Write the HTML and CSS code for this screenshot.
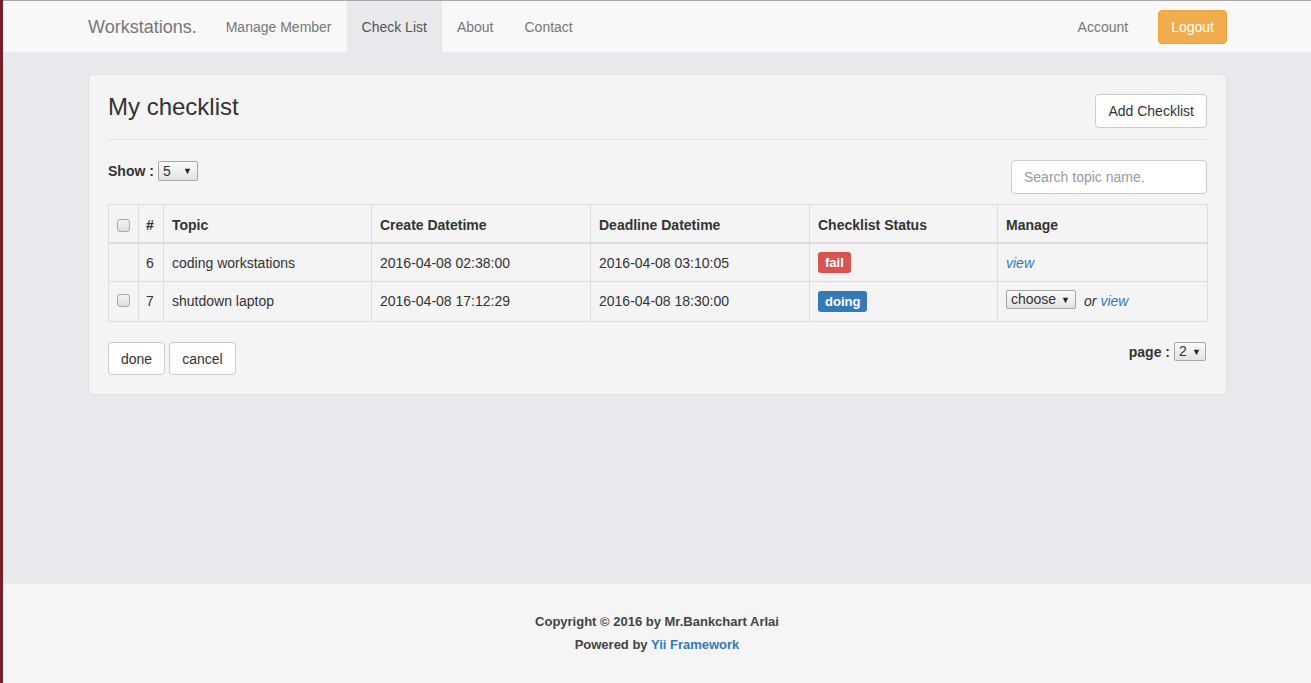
FILE: index.html
```html
<!DOCTYPE html>
<html lang="en">
<head>
<meta charset="utf-8">
<title>Workstations - Check List</title>
<link rel="stylesheet" href="styles.css">
</head>
<body>
<div class="page">
  <nav class="navbar">
    <div class="container nav-inner">
      <a class="brand" href="#">Workstations.</a>
      <ul class="nav">
        <li><a href="#">Manage Member</a></li>
        <li class="active"><a href="#">Check List</a></li>
        <li><a href="#">About</a></li>
        <li><a href="#">Contact</a></li>
      </ul>
      <ul class="nav nav-right">
        <li><a href="#">Account</a></li>
        <li><a class="btn btn-warning" href="#">Logout</a></li>
      </ul>
    </div>
  </nav>

  <main class="main">
    <div class="container">
      <section class="panel">
        <div class="panel-head">
          <h1>My checklist</h1>
          <a class="btn" href="#">Add Checklist</a>
        </div>
        <hr class="divider">
        <div class="toolbar">
          <div class="show">
            <span class="lbl">Show :</span>
            <span class="select sel-show"><select><option>5</option></select></span>
          </div>
          <input class="search" type="text" placeholder="Search topic name.">
        </div>

        <table class="grid">
          <colgroup>
            <col style="width:30px"><col style="width:25px"><col style="width:208px"><col style="width:219px"><col style="width:219px"><col style="width:188px"><col>
          </colgroup>
          <thead>
            <tr>
              <th><input class="chk" type="checkbox"></th>
              <th>#</th>
              <th>Topic</th>
              <th>Create Datetime</th>
              <th>Deadline Datetime</th>
              <th>Checklist Status</th>
              <th>Manage</th>
            </tr>
          </thead>
          <tbody>
            <tr>
              <td></td>
              <td>6</td>
              <td>coding workstations</td>
              <td>2016-04-08 02:38:00</td>
              <td>2016-04-08 03:10:05</td>
              <td><span class="badge badge-fail">fail</span></td>
              <td><a class="link" href="#">view</a></td>
            </tr>
            <tr class="row2">
              <td><input class="chk" type="checkbox"></td>
              <td>7</td>
              <td>shutdown laptop</td>
              <td>2016-04-08 17:12:29</td>
              <td>2016-04-08 18:30:00</td>
              <td><span class="badge badge-doing">doing</span></td>
              <td class="manage"><span class="select sel-choose"><select><option>choose</option></select></span><em class="or">or</em><a class="link" href="#">view</a></td>
            </tr>
          </tbody>
        </table>

        <div class="actions">
          <div class="btns">
            <a class="btn" href="#">done</a>
            <a class="btn" href="#">cancel</a>
          </div>
          <div class="pager">
            <span class="lbl">page :</span>
            <span class="select sel-page"><select><option>2</option></select></span>
          </div>
        </div>
      </section>
    </div>
  </main>

  <footer class="footer">
    <p>Copyright © 2016 by Mr.Bankchart Arlai</p>
    <p>Powered by <a href="#">Yii Framework</a></p>
  </footer>
</div>
</body>
</html>
```

FILE: styles.css
```css
* { box-sizing: border-box; }

html, body { height: 100%; }

body {
  margin: 0;
  border-left: 3px solid #74202a;
  font-family: "Liberation Sans", Arial, sans-serif;
  font-size: 14px;
  line-height: 20px;
  color: #333;
  background: #e8e9ec;
}

a { text-decoration: none; }

.page {
  min-height: 100%;
  display: flex;
  flex-direction: column;
  border-top: 1px solid #a8a8a8;
}

.container {
  width: 1140px;
  margin: 0 auto;
}

/* navbar */
.navbar {
  background: #f8f8f8;
  height: 51px;
}
.nav-inner {
  display: flex;
  align-items: flex-start;
  height: 51px;
}
.brand {
  display: block;
  font-size: 18px;
  line-height: 20px;
  padding: 16px 15px 14px 0;
  margin-left: 1px;
  color: #777;
  height: 50px;
}
.nav {
  list-style: none;
  margin: 0;
  padding: 0;
  display: flex;
}
.nav li a {
  display: block;
  padding: 16px 15px 14px;
  color: #777;
  height: 50px;
  line-height: 20px;
}
.nav li:first-child a { padding-left: 14px; padding-right: 15px; }
.nav li:last-child a { padding-left: 16px; }
.nav li.active a {
  background: #e8e9ec;
  color: #555;
  height: 51px;
}
.nav-right {
  margin-left: auto;
  align-items: flex-start;
}
.nav-right li:first-child a { padding-left: 15px; }
.nav-right li a.btn {
  margin: 9px 0 0 15px;
  padding: 6px 12px;
  height: 34px;
}

/* buttons */
.btn {
  display: inline-block;
  padding: 6px 12px;
  font-size: 14px;
  line-height: 20px;
  border: 1px solid #ccc;
  border-radius: 4px;
  background: #fff;
  color: #333;
  height: 34px;
}
.btn-warning {
  background: #f0ad4e;
  border-color: #eea236;
  color: #fff !important;
}

/* main */
.main {
  flex: 1;
  padding-top: 22px;
}
.panel {
  margin-left: 1px;
  width: 1139px;
  background: #f4f4f4;
  border: 1px solid #e0e0e2;
  border-radius: 4px;
  padding: 19px;
}
.panel-head {
  display: flex;
  justify-content: space-between;
  align-items: flex-start;
}
.panel-head h1 {
  margin: 0;
  font-size: 24px;
  line-height: 26px;
  font-weight: 500;
  color: #333;
}
.divider {
  border: 0;
  border-top: 1px solid #e4e4e4;
  margin: 11px 0 20px;
}

.toolbar {
  display: flex;
  justify-content: space-between;
  align-items: flex-start;
  margin-bottom: 10px;
}
.show, .pager {
  display: flex;
  align-items: center;
  gap: 4px;
  margin-top: 1px;
}
.lbl { font-weight: bold; }

.search {
  width: 196px;
  height: 34px;
  border: 1px solid #ccc;
  border-radius: 4px;
  background: #fff;
  padding: 6px 12px;
  font-family: "Liberation Sans", Arial, sans-serif;
  font-size: 14px;
  color: #555;
}
.search::placeholder { color: #999; }

/* fake native selects */
.select {
  position: relative;
  display: inline-block;
  vertical-align: top;
}
.select select {
  -webkit-appearance: none;
  appearance: none;
  display: block;
  height: 20px;
  border: 1px solid #a6a6a6;
  border-radius: 2px;
  background: linear-gradient(#fbfbfb, #e2e2e2);
  font-family: "Liberation Sans", Arial, sans-serif;
  font-size: 14px;
  line-height: 18px;
  color: #333;
  padding: 0 16px 0 4px;
  margin: 0;
}
.select::after {
  content: "\25BC";
  position: absolute;
  right: 6px;
  top: 5px;
  font-size: 9px;
  line-height: 10px;
  color: #222;
  pointer-events: none;
}
.sel-show select { width: 40px; }
.sel-choose select { width: 70px; height: 19px; line-height: 17px; }
.sel-page select { width: 32px; height: 19px; line-height: 17px; }
.sel-page::after { right: 5px; }

/* table */
.grid {
  width: 1100px;
  table-layout: fixed;
  border-collapse: collapse;
  border: 1px solid #ddd;
}
.grid th, .grid td {
  border: 1px solid #ddd;
  padding: 8px;
  text-align: left;
  vertical-align: middle;
  line-height: 20px;
}
.grid th {
  font-weight: bold;
  border-bottom: 2px solid #ddd;
  padding-top: 10px;
  padding-bottom: 7px;
}
.grid td:nth-child(2), .grid th:nth-child(2) { padding-left: 7px; padding-right: 4px; }
.row2 td { padding-top: 8px; padding-bottom: 9px; }

.manage { white-space: nowrap; }
.manage .sel-choose { margin-top: -1px; margin-bottom: -1px; }

.chk {
  -webkit-appearance: none;
  appearance: none;
  width: 13px;
  height: 13px;
  margin: 0;
  display: block;
  border: 1px solid #a9a9a9;
  border-radius: 3px;
  background: linear-gradient(#f4f4f4, #dcdcdc);
}

.badge {
  display: inline-block;
  font-size: 13px;
  font-weight: bold;
  line-height: 13px;
  padding: 4px 7px;
  margin: -1px 0 0;
  border-radius: 3px;
  color: #fff;
  vertical-align: middle;
}
.badge-fail { background: #d9534f; }
.badge-doing { background: #337ab7; }

.link { color: #337ab7; font-style: italic; }
.or { color: #333; margin: 0 4px 0 8px; }

.actions {
  display: flex;
  justify-content: space-between;
  align-items: flex-start;
  margin-top: 20px;
}
.btns { display: flex; gap: 4px; }
.btns .btn { height: 33px; padding-top: 6px; }
.pager { margin-top: 0; margin-right: 1px; }

/* footer */
.footer {
  background: #f5f5f5;
  height: 99px;
  padding-top: 26px;
  text-align: center;
  font-size: 13px;
  font-weight: bold;
  color: #444;
}
.footer p { margin: 0; line-height: 23px; }
.footer a { color: #337ab7; }
```
